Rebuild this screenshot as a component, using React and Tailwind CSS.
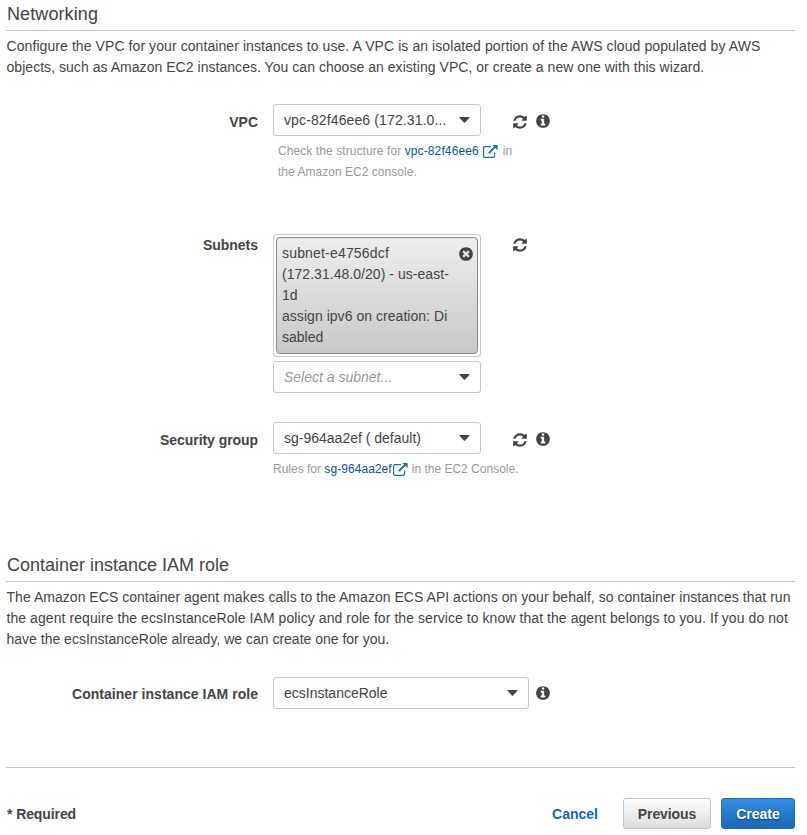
const REFRESH =
  "M1639 1056q0 5-1 7-64 268-268 434.5t-478 166.5q-146 0-282.5-55t-243.5-157l-129 129q-19 19-45 19t-45-19-19-45v-448q0-26 19-45t45-19h448q26 0 45 19t19 45-19 45l-137 137q71 66 161 102t187 36q134 0 250-65t186-179q11-17 53-117 8-23 30-23h192q13 0 22.5 9.5t9.5 22.5zm25-800v448q0 26-19 45t-45 19h-448q-26 0-45-19t-19-45 19-45l138-138q-148-137-349-137-134 0-250 65t-186 179q-11 17-53 117-8 23-30 23h-199q-13 0-22.5-9.5t-9.5-22.5v-7q65-268 270-434.5t480-166.5q146 0 284 55.5t245 156.5l130-129q19-19 45-19t45 19 19 45z";
const INFO =
  "M1152 1376v-160q0-14-9-23t-23-9h-96v-512q0-14-9-23t-23-9h-320q-14 0-23 9t-9 23v160q0 14 9 23t23 9h96v320h-96q-14 0-23 9t-9 23v160q0 14 9 23t23 9h448q14 0 23-9t9-23zm-128-896v-160q0-14-9-23t-23-9h-192q-14 0-23 9t-9 23v160q0 14 9 23t23 9h192q14 0 23-9t9-23zm640 416q0 209-103 385.5t-279.5 279.5-385.5 103-385.5-103-279.5-279.5-103-385.5 103-385.5 279.5-279.5 385.5-103 385.5 103 279.5 279.5 103 385.5z";
const CLOSE =
  "M1277 1122q0-26-19-45l-181-181 181-181q19-19 19-45 0-27-19-46l-90-90q-19-19-46-19-26 0-45 19l-181 181-181-181q-19-19-45-19-27 0-46 19l-90 90q-19 19-19 46 0 26 19 45l181 181-181 181q-19 19-19 45 0 27 19 46l90 90q19 19 46 19 26 0 45-19l181-181 181 181q19 19 45 19 27 0 46-19l90-90q19-19 19-46zm387-226q0 209-103 385.5t-279.5 279.5-385.5 103-385.5-103-279.5-279.5-103-385.5 103-385.5 279.5-279.5 385.5-103 385.5 103 279.5 279.5 103 385.5z";

function Glyph({ d, className = "" }) {
  return (
    <svg viewBox="0 0 1792 1792" fill="currentColor" className={`size-4 shrink-0 ${className}`}>
      <path d={d} />
    </svg>
  );
}

function ExternalLink({ className = "" }) {
  return (
    <svg viewBox="0 0 15 13" fill="none" className={`inline-block h-[13px] w-[15px] shrink-0 text-[#146eba] ${className}`}>
      <path d="M8 1.6H1.9Q.6 1.6.6 2.9v8.1q0 1.4 1.4 1.4h8.2q1.4 0 1.4-1.4V7.4" stroke="currentColor" strokeWidth="1.15" />
      <path d="M5.8 8.2l6-6" stroke="currentColor" strokeWidth="1.9" />
      <path d="M9.4 0h5.2v5.2z" fill="currentColor" />
    </svg>
  );
}

function Select({ children, className = "w-[208px]", textClass = "" }) {
  return (
    <div className={`flex h-8 items-center justify-between rounded-[3px] border border-[#c8c8c8] bg-white pl-[10px] pr-[10px] ${className}`}>
      <span className={`whitespace-nowrap leading-5 ${textClass}`}>{children}</span>
      <svg viewBox="0 0 11 6" className="h-[6px] w-[11px]" fill="#444">
        <path d="M.8 0h9.4q.8.2.3.8L6.1 5.6q-.6.5-1.2 0L.5.8Q0 .2.8 0z" />
      </svg>
    </div>
  );
}

function Label({ children, className = "" }) {
  return <div className={`w-[258px] shrink-0 whitespace-nowrap text-right font-bold leading-5 ${className}`}>{children}</div>;
}

function Heading({ children, className = "" }) {
  return (
    <h2 className={`ml-[6px] w-[789px] border-b border-[#c8c8c8] pl-px text-lg leading-7 ${className}`}>
      {children}
    </h2>
  );
}

export default function App() {
  return (
    <main className="h-[835px] w-[807px] overflow-hidden bg-white font-['Liberation_Sans',Arial,sans-serif] text-sm text-[#444]">
      <section className="h-[551px]">
        <Heading className="h-[31px] tracking-[0.1px]">Networking</Heading>
        <div className="ml-[6.5px] mt-[5px] whitespace-nowrap leading-[21px]">
          <p className="tracking-[0.08px]">Configure the VPC for your container instances to use. A VPC is an isolated portion of the AWS cloud populated by AWS</p>
          <p className="tracking-[0.04px]">objects, such as Amazon EC2 instances. You can choose an existing VPC, or create a new one with this wizard.</p>
        </div>

        <div className="mt-[26px] flex h-[130px]">
          <Label className="pt-2">VPC</Label>
          <div className="ml-[15px] w-[239px]">
            <Select textClass="tracking-[0.12px]">vpc-82f46ee6 (172.31.0...</Select>
            <div className="ml-[5px] mt-[5px] whitespace-nowrap text-xs leading-[21px] text-[#999]">
              <p className="flex items-center">
                <span className="tracking-[0.08px]">Check the structure for&nbsp;</span>
                <a className="tracking-[0.12px] text-[#0e4fa8]">vpc-82f46ee6</a>
                <ExternalLink className="ml-1" />
                <span className="ml-[5px]">in</span>
              </p>
              <p className="tracking-[0.03px]">the Amazon EC2 console.</p>
            </div>
          </div>
          <Glyph d={REFRESH} className="mt-[10px]" />
          <Glyph d={INFO} className="ml-[7px] mt-[9px]" />
        </div>

        <div className="flex h-[188px]">
          <Label className="pt-px tracking-[-0.02px]">Subnets</Label>
          <div className="ml-[15px] w-[239px]">
            <div className="h-[123px] w-[208px] rounded-[3px] border border-[#c8c8c8] p-[2px]">
              <div className="flex h-[117px] justify-between rounded-[4px] border border-[#888] bg-linear-to-b from-[#eee] to-[#c8c8c8] pl-[5px] pr-[3px] pt-[5px]">
                <div className="whitespace-nowrap leading-[21px]">
                  <p className="tracking-[0.18px]">subnet-e4756dcf</p>
                  <p className="tracking-[0.04px]">(172.31.48.0/20) - us-east-</p>
                  <p>1d</p>
                  <p className="tracking-[0.04px]">assign ipv6 on creation: Di</p>
                  <p>sabled</p>
                </div>
                <Glyph d={CLOSE} className="mt-[3px]" />
              </div>
            </div>
            <div className="mt-1">
              <Select textClass="italic text-[#999]">Select a subnet...</Select>
            </div>
          </div>
          <Glyph d={REFRESH} className="mt-[3px]" />
        </div>

        <div className="flex">
          <Label className="pt-2 tracking-[-0.06px]">Security group</Label>
          <div className="ml-[15px] w-[239px]">
            <Select>sg-964aa2ef ( default)</Select>
            <p className="mt-[5px] flex items-center whitespace-nowrap text-xs leading-[21px] text-[#999]">
              <span>Rules for&nbsp;</span>
              <a className="tracking-[0.06px] text-[#0e4fa8]">sg-964aa2ef</a>
              <ExternalLink className="ml-px" />
              <span className="ml-1">in the EC2 Console.</span>
            </p>
          </div>
          <Glyph d={REFRESH} className="mt-[10px]" />
          <Glyph d={INFO} className="ml-[7px] mt-[9px]" />
        </div>
      </section>

      <section className="h-[216px]">
        <Heading className="h-[31px]">Container instance IAM role</Heading>
        <div className="ml-[6.5px] mt-[5px] whitespace-nowrap leading-[21px]">
          <p className="tracking-[0.035px]">The Amazon ECS container agent makes calls to the Amazon ECS API actions on your behalf, so container instances that run</p>
          <p className="tracking-[0.068px]">the agent require the ecsInstanceRole IAM policy and role for the service to know that the agent belongs to you. If you do not</p>
          <p>have the ecsInstanceRole already, we can create one for you.</p>
        </div>
        <div className="mt-[27px] flex">
          <Label className="pt-[7px] tracking-[0.03px]">Container instance IAM role</Label>
          <div className="ml-[15px]">
            <Select className="w-[256px]">ecsInstanceRole</Select>
          </div>
          <Glyph d={INFO} className="ml-[6px] mt-2" />
        </div>
      </section>

      <footer className="ml-[6px] w-[789px] border-t border-[#c8c8c8] pt-[30px]">
        <div className="flex items-center font-bold">
          <span className="ml-px mr-auto tracking-[-0.1px]">* Required</span>
          <a className="mr-[25px] text-[#1166bb]">Cancel</a>
          <button className="mr-[10px] h-[31px] w-[88px] rounded-[3px] border border-[#c5c5c5] bg-linear-to-b from-white to-[#dcdcdc] font-bold tracking-[-0.1px]">Previous</button>
          <button className="h-[31px] w-[74px] rounded-[3px] border border-[#1f6bb5] bg-linear-to-b from-[#338de6] to-[#1b67b8] font-bold text-white [text-shadow:0_1px_2px_#0a3a70]">Create</button>
        </div>
      </footer>
    </main>
  );
}
